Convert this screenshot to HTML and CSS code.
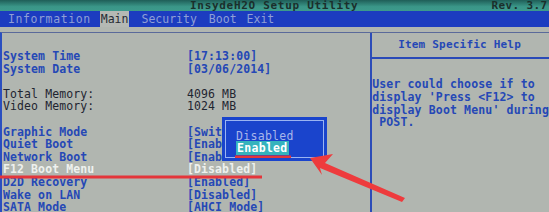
FILE: index.html
```html
<!DOCTYPE html>
<html>
<head>
<meta charset="utf-8">
<link rel="stylesheet" href="styles.css">
</head>
<body>
<div class="screen">
  <div class="title">
    <span class="title-text">InsydeH2O Setup Utility</span>
    <span class="rev">Rev. 3.7</span>
  </div>
  <div class="menu">
    <span class="mi mi-info">Information</span>
    <span class="mi mi-main">Main</span>
    <span class="mi mi-sec">Security</span>
    <span class="mi mi-boot">Boot</span>
    <span class="mi mi-exit">Exit</span>
  </div>
  <div class="frame">
    <div class="left">
      <div class="row"><span class="lab">System Time</span><span class="val">[17:13:00]</span></div>
      <div class="row"><span class="lab">System Date</span><span class="val">[03/06/2014]</span></div>
      <div class="row blank"></div>
      <div class="row dark"><span class="lab">Total Memory:</span><span class="val">4096 MB</span></div>
      <div class="row dark"><span class="lab">Video Memory:</span><span class="val">1024 MB</span></div>
      <div class="row blank"></div>
      <div class="row"><span class="lab">Graphic Mode</span><span class="val">[Swit</span></div>
      <div class="row"><span class="lab">Quiet Boot</span><span class="val">[Enab</span></div>
      <div class="row"><span class="lab">Network Boot</span><span class="val">[Enab</span></div>
      <div class="row sel"><span class="lab">F12 Boot Menu</span><span class="val">[Disabled]</span></div>
      <div class="row"><span class="lab">D2D Recovery</span><span class="val">[Enabled]</span></div>
      <div class="row"><span class="lab">Wake on LAN</span><span class="val">[Disabled]</span></div>
      <div class="row"><span class="lab">SATA Mode</span><span class="val">[AHCI Mode]</span></div>
    </div>
    <div class="right">
      <div class="help-head">Item Specific Help</div>
      <div class="help-body">
        <div class="hl">User could choose if to</div>
        <div class="hl">display 'Press &lt;F12&gt; to</div>
        <div class="hl">display Boot Menu' during</div>
        <div class="hl ind">POST.</div>
      </div>
    </div>
  </div>
  <div class="popup">
    <div class="popup-inner">
      <div class="opt">Disabled</div>
      <div class="opt on"><span>Enabled</span></div>
    </div>
  </div>
  <svg class="marks" width="549" height="212" viewBox="0 0 549 212">
    <rect x="0" y="175.5" width="262" height="3" fill="#e4353a"/>
    <rect x="235" y="155.5" width="56" height="2.5" fill="#e4353a"/>
    <polygon points="310,158 333,154 325,163 405,198 402,202 320,168 322,175" fill="#ee3b3d"/>
  </svg>
</div>
</body>
</html>
```

FILE: styles.css
```css
html, body {
  margin: 0;
  padding: 0;
}
body {
  width: 549px;
  height: 212px;
  overflow: hidden;
  background: #b2b7b1;
}
.screen {
  position: relative;
  width: 549px;
  height: 212px;
  overflow: hidden;
  background: #b1b6b0;
  font-family: "DejaVu Sans Mono", "Liberation Mono", monospace;
  font-weight: bold;
  font-size: 11.5px;
}
.title {
  height: 11px;
  background: linear-gradient(#1f5e58, #3a9688 60%, #3d9a8c);
  display: flex;
  align-items: center;
  color: #1b2f2c;
  font-size: 11px;
  line-height: 11px;
  white-space: nowrap;
}
.title-text {
  margin-left: 190px;
  letter-spacing: 0.7px;
}
.rev {
  margin-left: 133px;
  letter-spacing: 0.4px;
}
.menu {
  height: 16px;
  background: #1c3cc0;
  display: flex;
  align-items: center;
  color: #8f9fd6;
  line-height: 16px;
  font-weight: normal;
  font-size: 11.5px;
  white-space: nowrap;
}
.mi {
  letter-spacing: 0.3px;
}
.mi-info { margin-left: 8px; letter-spacing: 0.6px; }
.mi-main {
  margin-left: 9px;
  background: #b5b9b4;
  color: #262b33;
  padding: 0 1px;
  height: 16px;
  letter-spacing: 0;
}
.mi-sec { margin-left: 12px; letter-spacing: 0; }
.mi-boot { margin-left: 12px; letter-spacing: 0; }
.mi-exit { margin-left: 10px; letter-spacing: 0; }
.frame {
  display: flex;
  margin-top: 5px;
  border-top: 1px solid #5a6a9a;
  height: 180px;
  border-left: 2px solid #2a4fc0;
}
.left {
  width: 370px;
  padding-top: 17px;
  border-right: 2px solid #2c4cb8;
}
.row {
  display: flex;
  height: 12.6px;
  line-height: 12.6px;
  color: #2548b6;
  white-space: nowrap;
}
.row.dark { color: #1f2530; font-weight: normal; }
.row.sel { color: #eef1ee; }
.lab {
  width: 184px;
  padding-left: 1px;
  letter-spacing: 0.1px;
}
.val {
  letter-spacing: 0.1px;
}
.right {
  flex: 1;
  display: flex;
  flex-direction: column;
}
.help-head {
  height: 24px;
  line-height: 24px;
  border-bottom: 2px solid #2a4ab8;
  color: #2548b6;
  padding-left: 26px;
  font-size: 11px;
  letter-spacing: 0.2px;
}
.help-body {
  padding-top: 19px;
  padding-left: 0;
  color: #2548b6;
}
.hl {
  height: 12.8px;
  line-height: 12.8px;
  white-space: nowrap;
  letter-spacing: 0.15px;
}
.hl.ind { padding-left: 7px; }
.popup {
  position: absolute;
  left: 222px;
  top: 117px;
  width: 105px;
  height: 44px;
  background: #1a44cc;
  padding: 3px;
  box-sizing: border-box;
}
.popup-inner {
  height: 100%;
  border: 1px solid #9ab4f2;
  box-sizing: border-box;
  padding: 9px 0 0 10px;
}
.opt {
  height: 12px;
  line-height: 12px;
  color: #a8b6ea;
  font-weight: normal;
  letter-spacing: 0.3px;
}
.opt.on span {
  background: #35b3bd;
  color: #ffffff;
  font-weight: bold;
  padding: 0 1px;
}
.marks {
  position: absolute;
  left: 0;
  top: 0;
}
```
